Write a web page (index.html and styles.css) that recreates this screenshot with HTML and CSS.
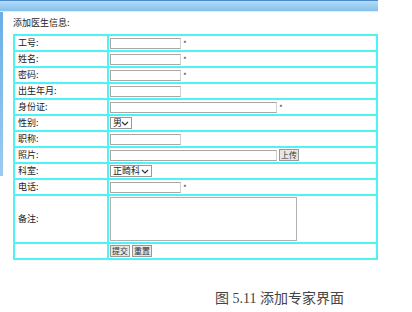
FILE: index.html
```html
<!DOCTYPE html>
<html lang="zh-CN">
<head>
  <meta charset="utf-8">
  <title>添加医生信息</title>
  <link rel="stylesheet" href="styles.css">
</head>
<body>

  <div class="frame">
    <div class="topbar"></div>

    <div class="content">
      <p class="title">添加医生信息:</p>

      <table class="form-table">
        <tr>
          <td class="label">工号:</td>
          <td><input type="text" class="short"> <span class="star">*</span></td>
        </tr>
        <tr>
          <td class="label">姓名:</td>
          <td><input type="text" class="short"> <span class="star">*</span></td>
        </tr>
        <tr>
          <td class="label">密码:</td>
          <td><input type="password" class="short"> <span class="star">*</span></td>
        </tr>
        <tr>
          <td class="label">出生年月:</td>
          <td><input type="text" class="short"></td>
        </tr>
        <tr>
          <td class="label">身份证:</td>
          <td><input type="text" class="long"> <span class="star">*</span></td>
        </tr>
        <tr>
          <td class="label">性别:</td>
          <td>
            <select class="sex">
              <option>男</option>
              <option>女</option>
            </select>
          </td>
        </tr>
        <tr>
          <td class="label">职称:</td>
          <td><input type="text" class="short"></td>
        </tr>
        <tr>
          <td class="label">照片:</td>
          <td><input type="text" class="long"> <button class="btn">上传</button></td>
        </tr>
        <tr>
          <td class="label">科室:</td>
          <td>
            <select class="dept">
              <option>正畸科</option>
            </select>
          </td>
        </tr>
        <tr>
          <td class="label">电话:</td>
          <td><input type="text" class="short"> <span class="star">*</span></td>
        </tr>
        <tr class="tall">
          <td class="label">备注:</td>
          <td><textarea class="note"></textarea></td>
        </tr>
        <tr>
          <td class="label"></td>
          <td><button class="btn">提交</button> <button class="btn">重置</button></td>
        </tr>
      </table>
    </div>
  </div>

  <div class="caption">图 5.11 添加专家界面</div>

</body>
</html>
```

FILE: styles.css
```css
/* page */
body {
  margin: 0;
  padding: 0;
  background: #fff;
  font-family: "Noto Sans CJK SC", "Liberation Sans", sans-serif;
  font-size: 9px;
  color: #222;
}

.frame {
  width: 378px;
}

.topbar {
  height: 10px;
  border-top: 1px solid #4a8ccc;
  background: linear-gradient(#b4dcfa, #84c0ec);
  border-bottom: 1px solid #dceefb;
}

.content {
  padding: 4px 0 0 13px;
  background: linear-gradient(#6aaee6, #9ccbf0) no-repeat 0 0 / 3px 164px;
}

.title {
  margin: 0 0 4px;
  height: 14px;
  line-height: 14px;
}

/* form table */
.form-table {
  width: 365px;
  border-collapse: collapse;
}

.form-table td {
  border: 2px solid #4ef4f4;
  height: 14px;
  padding: 0 0 0 1px;
  line-height: 12px;
  white-space: nowrap;
}

.form-table td.label {
  width: 89px;
  padding-left: 3px;
}

.form-table tr.tall td {
  height: 46px;
}

input {
  box-sizing: border-box;
  height: 11px;
  border: 1px solid #a8a8a8;
  border-right-color: #d0d0d0;
  padding: 0;
  margin: 0;
  vertical-align: middle;
  background: #fff;
}

input.short {
  width: 71px;
}

input.long {
  width: 167px;
}

.star {
  font-size: 8px;
  color: #345;
  vertical-align: middle;
}

select {
  appearance: none;
  box-sizing: border-box;
  height: 12px;
  font-family: inherit;
  font-size: 9px;
  line-height: 10px;
  border: 1px solid #999;
  padding: 0 0 0 2px;
  margin: 0;
  vertical-align: middle;
  color: #222;
  background: #fff url("data:image/svg+xml,%3Csvg xmlns='http://www.w3.org/2000/svg' width='8' height='5'%3E%3Cpath d='M1 1l3 3 3-3' fill='none' stroke='%23333' stroke-width='1.2'/%3E%3C/svg%3E") no-repeat right 2px center;
}

select.sex {
  width: 22px;
}

select.dept {
  width: 42px;
}

.note {
  box-sizing: border-box;
  display: block;
  width: 187px;
  height: 44px;
  margin: 0;
  border: 1px solid #b0b0b0;
  resize: none;
}

.btn {
  box-sizing: border-box;
  height: 12px;
  padding: 0 1px;
  margin: 0;
  font-family: inherit;
  font-size: 8px;
  line-height: 10px;
  border: 1px solid #999;
  background: #e6e6e6;
  color: #333;
  vertical-align: middle;
}

/* figure caption */
.caption {
  margin-top: 30px;
  padding-left: 215px;
  font-family: "Liberation Serif", "Noto Sans CJK SC", serif;
  font-size: 14px;
  line-height: 18px;
  color: #444;
}
```
